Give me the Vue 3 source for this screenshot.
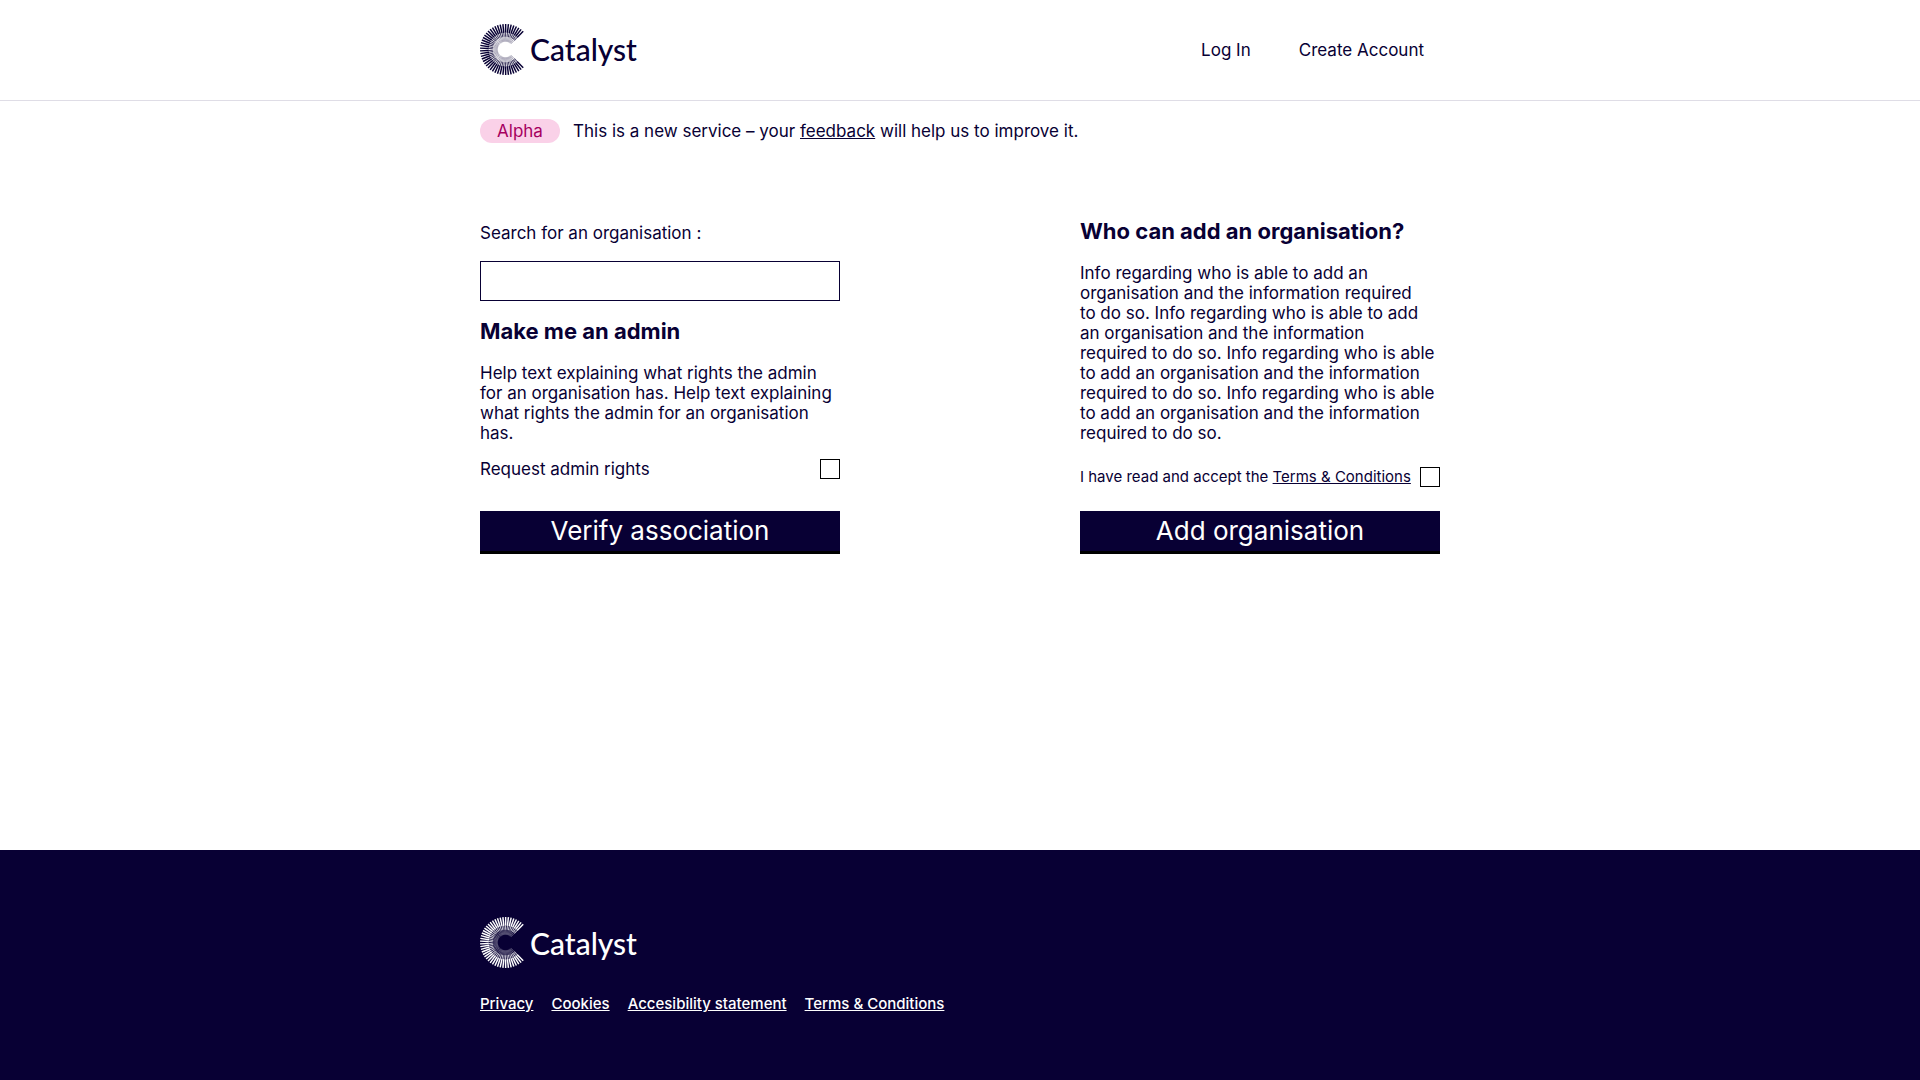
<script setup>
import { ref } from 'vue'

const organisation = ref('')
const wantsAdmin = ref(false)
const acceptsTerms = ref(false)

const footerLinks = ['Privacy', 'Cookies', 'Accesibility statement', 'Terms & Conditions']

// The mark is a fan of rays that leaves a quarter turn open on the right.
const rayCount = 44
const rays = Array.from({ length: rayCount }, (_, i) => 46 + (i * 268) / (rayCount - 1))
</script>

<template>
  <div class="page">
    <header class="header">
      <div class="container header-row">
        <a href="#" class="logo">
          <svg class="mark" viewBox="0 0 52 52" aria-hidden="true">
            <g v-for="angle in rays" :key="angle" :transform="`rotate(${angle} 26 26)`" stroke="currentColor">
              <line x1="43" y1="26" x2="52" y2="26" stroke-width="1.5" />
              <line x1="39" y1="26" x2="43" y2="26" stroke-width="1" opacity="0.8" />
              <line x1="34" y1="26" x2="39" y2="26" stroke-width="0.6" opacity="0.5" />
            </g>
          </svg>
          <span class="wordmark">Catalyst</span>
        </a>
        <nav class="nav">
          <a href="#">Log In</a>
          <a href="#">Create Account</a>
        </nav>
      </div>
    </header>

    <div class="container banner">
      <span class="tag">Alpha</span>
      <p class="banner-text">This is a new service – your <a href="#">feedback</a> will help us to improve it.</p>
    </div>

    <main class="container columns">
      <form class="column" @submit.prevent>
        <label class="search-label" for="organisation">Search for an organisation :</label>
        <input id="organisation" v-model="organisation" class="search" type="text" />
        <h2 class="heading">Make me an admin</h2>
        <p class="copy">
          Help text explaining what rights the admin<br />
          for an organisation has. Help text explaining<br />
          what rights the admin for an organisation<br />
          has.
        </p>
        <div class="check-row">
          <label for="admin">Request admin rights</label>
          <input id="admin" v-model="wantsAdmin" class="checkbox" type="checkbox" />
        </div>
        <button class="button" type="submit">Verify association</button>
      </form>

      <form class="column" @submit.prevent>
        <h2 class="heading">Who can add an organisation?</h2>
        <p class="copy">
          Info regarding who is able to add an<br />
          organisation and the information required<br />
          to do so. Info regarding who is able to add<br />
          an organisation and the information<br />
          required to do so. Info regarding who is able<br />
          to add an organisation and the information<br />
          required to do so. Info regarding who is able<br />
          to add an organisation and the information<br />
          required to do so.
        </p>
        <div class="check-row terms-row">
          <label for="terms">I have read and accept the <a href="#">Terms &amp; Conditions</a></label>
          <input id="terms" v-model="acceptsTerms" class="checkbox" type="checkbox" />
        </div>
        <button class="button" type="submit">Add organisation</button>
      </form>
    </main>

    <footer class="footer">
      <div class="container">
        <a href="#" class="logo">
          <svg class="mark" viewBox="0 0 52 52" aria-hidden="true">
            <g v-for="angle in rays" :key="angle" :transform="`rotate(${angle} 26 26)`" stroke="currentColor">
              <line x1="43" y1="26" x2="52" y2="26" stroke-width="1.5" />
              <line x1="39" y1="26" x2="43" y2="26" stroke-width="1" opacity="0.8" />
              <line x1="34" y1="26" x2="39" y2="26" stroke-width="0.6" opacity="0.5" />
            </g>
          </svg>
          <span class="wordmark">Catalyst</span>
        </a>
        <nav class="footer-nav">
          <a v-for="link in footerLinks" :key="link" href="#">{{ link }}</a>
        </nav>
      </div>
    </footer>
  </div>
</template>

<style>
body {
  margin: 0;
  background: #fff;
}
</style>

<style scoped>
.page {
  display: flex;
  flex-direction: column;
  min-height: 100vh;
  color: #080034;
  font-family: Inter, "Open Sans", sans-serif;
  font-size: 17px;
  line-height: 20px;
}

.page *,
.page {
  box-sizing: border-box;
}

a {
  color: inherit;
}

.container {
  width: 100%;
  max-width: 960px;
  margin: 0 auto;
}

.header {
  border-bottom: 1px solid #dfdde6;
}

.header-row {
  display: flex;
  align-items: center;
  justify-content: space-between;
  height: 100px;
  padding-right: 16px;
}

.logo {
  display: flex;
  align-items: center;
  width: fit-content;
  text-decoration: none;
}

.mark {
  width: 51px;
  height: 51px;
}

.wordmark {
  margin-left: -1px;
  font-family: Lato, sans-serif;
  font-size: 30px;
  font-weight: 500;
  line-height: 36px;
}

.header .logo {
  padding-bottom: 2px;
}

.nav {
  display: flex;
  gap: 48px;
}

.nav a {
  text-decoration: none;
}

.banner {
  display: flex;
  align-items: center;
  gap: 13px;
  padding-top: 18px;
}

.tag {
  width: 80px;
  border-radius: 12px;
  background: #fad1e8;
  color: #a6005f;
  line-height: 24px;
  text-align: center;
}

.banner-text {
  margin: 0;
}

.columns {
  display: flex;
  flex: 1;
  align-items: flex-start;
  justify-content: space-between;
  padding-top: 76px;
  padding-bottom: 40px;
}

.column {
  display: flex;
  flex-direction: column;
  width: 360px;
}

.search-label {
  margin-bottom: 14px;
  line-height: 28px;
}

.search {
  height: 40px;
  margin-bottom: 18px;
  padding: 0 8px;
  border: 1px solid #080034;
  border-radius: 0;
  background: #fff;
  color: inherit;
  font: inherit;
}

.heading {
  margin: 0 0 20px;
  font-size: 22px;
  font-weight: 700;
  line-height: 24px;
}

.copy {
  margin: 0;
}

.check-row {
  display: flex;
  align-items: center;
  justify-content: space-between;
  margin: 16px 0 32px;
}

.terms-row {
  margin: 24px 0;
  font-size: 15px;
}

.checkbox {
  width: 20px;
  height: 20px;
  margin: 0;
  border: 1px solid #000;
  background: #fff;
  appearance: none;
}

.checkbox:checked {
  background: #080034;
}

.button {
  height: 43px;
  padding: 0;
  border: 0;
  border-bottom: 3px solid #000;
  background: #080034;
  color: #fff;
  font-family: inherit;
  font-size: 26px;
  line-height: 40px;
}

.footer {
  padding: 67px 0 66px;
  background: #080034;
  color: #fff;
}

.footer-nav {
  display: flex;
  gap: 18px;
  margin-top: 26px;
  font-size: 15px;
  font-weight: 500;
}
</style>
